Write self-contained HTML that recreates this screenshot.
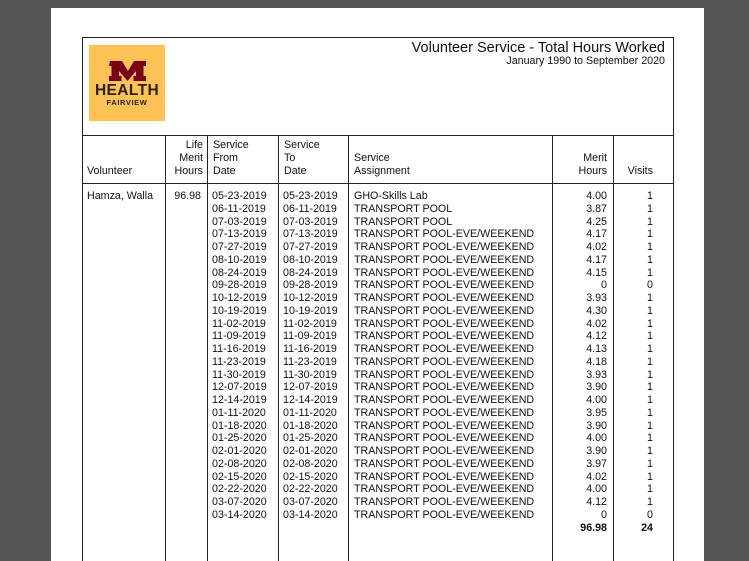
<!DOCTYPE html><html><head><style>
body{margin:0;width:749px;height:561px;background:#525659;overflow:hidden;position:relative;font-family:"Liberation Sans",Arial,sans-serif;font-size:10.7px;color:#111}
.pg{position:absolute;left:51px;top:8px;width:653px;height:553px;background:#fff}
.l{position:absolute;background:#222}
.t{position:absolute;line-height:12.75px;white-space:pre}
.r{text-align:right}
</style></head><body>
<div class="pg"></div>
<div class="l" style="left:82px;top:37px;width:592px;height:1px"></div>
<div class="l" style="left:82px;top:37px;width:1px;height:524px"></div>
<div class="l" style="left:673px;top:37px;width:1px;height:524px"></div>
<div class="l" style="left:82px;top:135px;width:592px;height:1px"></div>
<div class="l" style="left:82px;top:183px;width:592px;height:1px"></div>
<div class="l" style="left:165px;top:135px;width:1px;height:426px"></div>
<div class="l" style="left:207px;top:135px;width:1px;height:426px"></div>
<div class="l" style="left:278px;top:135px;width:1px;height:426px"></div>
<div class="l" style="left:348px;top:135px;width:1px;height:426px"></div>
<div class="l" style="left:552px;top:135px;width:1px;height:426px"></div>
<div class="l" style="left:613px;top:135px;width:1px;height:426px"></div>
<div style="position:absolute;left:89px;top:45px;width:76px;height:76px;background:#fec256"></div>
<svg style="position:absolute;left:89px;top:45px" width="76" height="76" viewBox="0 0 76 76"><path d="M21 16h12l6 10 6-10h12v5h-2.5v10h2.5v5h-12.5v-5h2.5v-5l-8.5 10-8.5-10v5h2.5v5h-12.5v-5h2.5v-10h-2.5z" fill="#7a0019"/></svg>
<div class="t" style="left:89px;top:82px;width:76px;text-align:center;font-size:15.5px;line-height:18px;font-weight:bold;color:#2a2018;letter-spacing:0.4px">HEALTH</div>
<div class="t" style="left:89px;top:98px;width:76px;text-align:center;font-size:7.5px;line-height:10px;font-weight:bold;color:#2a2018;letter-spacing:0.6px">FAIRVIEW</div>
<div class="t r" style="right:84px;top:39px;font-size:14.5px;line-height:18px">Volunteer Service - Total Hours Worked</div>
<div class="t r" style="right:84px;top:55px">January 1990 to September 2020</div>
<div class="t" style="left:87px;top:165px">Volunteer</div>
<div class="t r" style="left:166px;width:37px;top:139px">Life
Merit
Hours</div>
<div class="t" style="left:213px;top:139px">Service
From
Date</div>
<div class="t" style="left:284px;top:139px">Service
To
Date</div>
<div class="t" style="left:354px;top:152px">Service
Assignment</div>
<div class="t r" style="left:553px;width:54px;top:152px">Merit
Hours</div>
<div class="t r" style="left:614px;width:39px;top:165px">Visits</div>
<div class="t" style="left:87px;top:190px">Hamza, Walla</div>
<div class="t r" style="left:166px;width:35px;top:190px">96.98</div>
<div class="t" style="left:212px;top:190px">05-23-2019
06-11-2019
07-03-2019
07-13-2019
07-27-2019
08-10-2019
08-24-2019
09-28-2019
10-12-2019
10-19-2019
11-02-2019
11-09-2019
11-16-2019
11-23-2019
11-30-2019
12-07-2019
12-14-2019
01-11-2020
01-18-2020
01-25-2020
02-01-2020
02-08-2020
02-15-2020
02-22-2020
03-07-2020
03-14-2020</div>
<div class="t" style="left:283px;top:190px">05-23-2019
06-11-2019
07-03-2019
07-13-2019
07-27-2019
08-10-2019
08-24-2019
09-28-2019
10-12-2019
10-19-2019
11-02-2019
11-09-2019
11-16-2019
11-23-2019
11-30-2019
12-07-2019
12-14-2019
01-11-2020
01-18-2020
01-25-2020
02-01-2020
02-08-2020
02-15-2020
02-22-2020
03-07-2020
03-14-2020</div>
<div class="t" style="left:354px;top:190px">GHO-Skills Lab
TRANSPORT POOL
TRANSPORT POOL
TRANSPORT POOL-EVE/WEEKEND
TRANSPORT POOL-EVE/WEEKEND
TRANSPORT POOL-EVE/WEEKEND
TRANSPORT POOL-EVE/WEEKEND
TRANSPORT POOL-EVE/WEEKEND
TRANSPORT POOL-EVE/WEEKEND
TRANSPORT POOL-EVE/WEEKEND
TRANSPORT POOL-EVE/WEEKEND
TRANSPORT POOL-EVE/WEEKEND
TRANSPORT POOL-EVE/WEEKEND
TRANSPORT POOL-EVE/WEEKEND
TRANSPORT POOL-EVE/WEEKEND
TRANSPORT POOL-EVE/WEEKEND
TRANSPORT POOL-EVE/WEEKEND
TRANSPORT POOL-EVE/WEEKEND
TRANSPORT POOL-EVE/WEEKEND
TRANSPORT POOL-EVE/WEEKEND
TRANSPORT POOL-EVE/WEEKEND
TRANSPORT POOL-EVE/WEEKEND
TRANSPORT POOL-EVE/WEEKEND
TRANSPORT POOL-EVE/WEEKEND
TRANSPORT POOL-EVE/WEEKEND
TRANSPORT POOL-EVE/WEEKEND</div>
<div class="t r" style="left:553px;width:54px;top:190px">4.00
3.87
4.25
4.17
4.02
4.17
4.15
0
3.93
4.30
4.02
4.12
4.13
4.18
3.93
3.90
4.00
3.95
3.90
4.00
3.90
3.97
4.02
4.00
4.12
0
<b>96.98</b></div>
<div class="t r" style="left:614px;width:39px;top:190px">1
1
1
1
1
1
1
0
1
1
1
1
1
1
1
1
1
1
1
1
1
1
1
1
1
0
<b>24</b></div>
</body></html>
